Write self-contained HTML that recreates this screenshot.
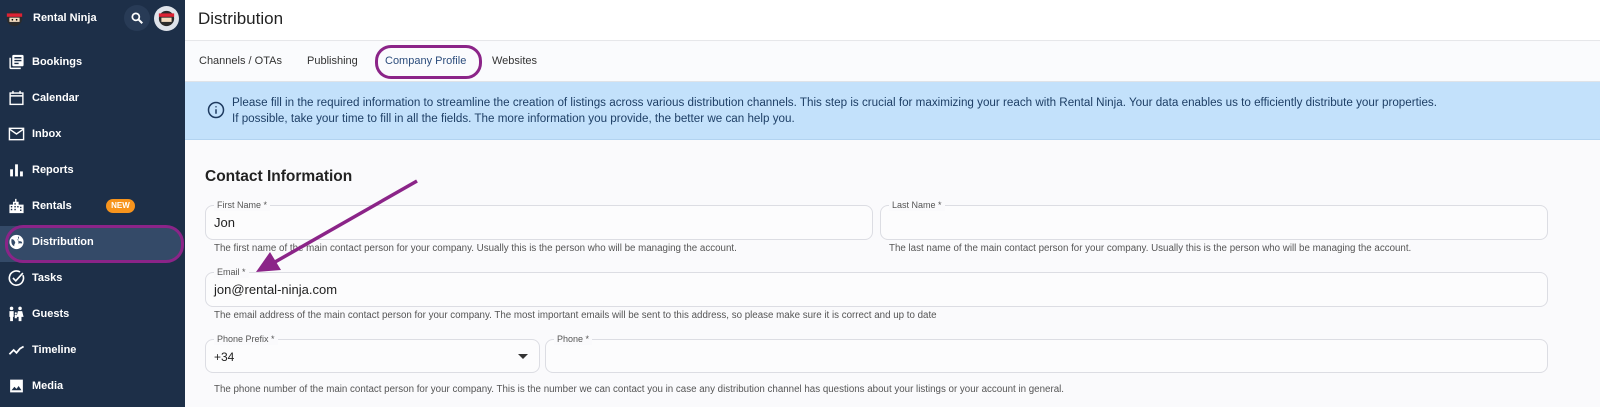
<!DOCTYPE html>
<html><head><meta charset="utf-8"><style>
*{margin:0;padding:0;box-sizing:border-box}
body{width:1600px;height:407px;overflow:hidden;font-family:"Liberation Sans",sans-serif;background:#fafafc;position:relative}
.a{position:absolute}
#sb{left:0;top:0;width:185px;height:407px;background:#1d2f48}
.nav{position:absolute;left:32px;color:#fff;font-size:11px;font-weight:bold;transform:translateY(-50%)}
.ic{position:absolute;left:8px;width:17px;height:17px;transform:translateY(-50%)}
.lab{position:absolute;font-size:9px;color:#555;background:#fafafc;padding:0 3px;left:8px;top:-6px;line-height:11px}
.fld{position:absolute;border:1px solid #dcdde3;border-radius:8px;background:#fcfcfd}
.val{position:absolute;left:8px;top:9px;font-size:13px;color:#222}
.help{position:absolute;font-size:9.75px;color:#555}
.tab{position:absolute;top:55px;font-size:11px;color:#333}
</style></head><body>
<div id="sb" class="a">
  <svg class="a" style="left:6px;top:10px" width="17" height="17" viewBox="0 0 20 20"><circle cx="10" cy="10" r="9" fill="#2b2b2b"/><rect x="1" y="4" width="18" height="4" fill="#d23"/><rect x="4" y="9" width="12" height="5" fill="#f4dcc0"/><circle cx="7.5" cy="11.5" r="1" fill="#000"/><circle cx="12.5" cy="11.5" r="1" fill="#000"/></svg>
  <div class="a" style="left:33px;top:12px;color:#fff;font-size:11px;font-weight:bold">Rental Ninja</div>
  <div class="a" style="left:124px;top:5px;width:26px;height:26px;border-radius:50%;background:#283b56"></div>
  <svg class="a" style="left:130px;top:11px" width="14" height="14" viewBox="0 0 24 24"><circle cx="10" cy="10" r="6" stroke="#fff" stroke-width="3" fill="none"/><path d="M14.5 14.5L21 21" stroke="#fff" stroke-width="3.5"/></svg>
  <div class="a" style="left:154px;top:6px;width:25px;height:25px;border-radius:50%;background:#dfe3ea"></div>
  <svg class="a" style="left:158px;top:10px" width="17" height="17" viewBox="0 0 20 20"><circle cx="10" cy="10" r="9" fill="#2b2b2b"/><rect x="1" y="4" width="18" height="4" fill="#d23"/><rect x="4" y="9" width="12" height="5" fill="#f4dcc0"/></svg>

  <div class="a" style="left:0;top:226px;width:182px;height:36px;background:#344a68;border-radius:0 14px 14px 0"></div>
  <div class="a" style="left:5px;top:225px;width:179px;height:38px;border:3px solid #8b2488;border-radius:18px"></div>

  <svg class="ic" style="top:62px" viewBox="0 0 24 24" fill="#fff"><path d="M4 6H2v14a2 2 0 002 2h14v-2H4V6zm16-4H8a2 2 0 00-2 2v12a2 2 0 002 2h12a2 2 0 002-2V4a2 2 0 00-2-2zm-1 9H9V9h10v2zm-4 4H9v-2h6v2zm4-8H9V5h10v2z"/></svg>
  <div class="nav" style="top:62px">Bookings</div>
  <svg class="ic" style="top:98px" viewBox="0 0 24 24" fill="none" stroke="#fff" stroke-width="2"><rect x="3" y="5" width="18" height="16"/><path d="M3 9h18M7 2v4M17 2v4"/></svg>
  <div class="nav" style="top:98px">Calendar</div>
  <svg class="ic" style="top:134px" viewBox="0 0 24 24" fill="none" stroke="#fff" stroke-width="2"><rect x="2" y="4" width="20" height="16"/><path d="M2 5l10 7 10-7"/></svg>
  <div class="nav" style="top:134px">Inbox</div>
  <svg class="ic" style="top:170px" viewBox="0 0 24 24" fill="#fff"><rect x="3" y="11" width="4" height="10"/><rect x="10" y="4" width="4" height="17"/><rect x="17" y="14" width="4" height="7"/></svg>
  <div class="nav" style="top:170px">Reports</div>
  <svg class="ic" style="top:206px" viewBox="0 0 24 24" fill="#fff"><path d="M2 22V10h5V6h3V2h2v4h3v4h7v12H2z"/><g fill="#1d2f48"><rect x="4" y="12" width="2" height="2"/><rect x="4" y="16" width="2" height="2"/><rect x="9" y="8" width="2" height="2"/><rect x="9" y="12" width="2" height="2"/><rect x="13" y="12" width="2" height="2"/><rect x="17" y="13" width="2" height="2"/><rect x="17" y="17" width="2" height="2"/><rect x="9" y="16" width="2" height="2"/></g></svg>
  <div class="nav" style="top:206px">Rentals</div>
  <div class="a" style="left:106px;top:199px;width:29px;height:14px;border-radius:7px;background:#f7941d;color:#fff;font-size:8px;font-weight:bold;text-align:center;line-height:14px">NEW</div>
  <svg class="ic" style="top:242px" viewBox="0 0 24 24"><circle cx="12" cy="12" r="10" fill="#fff"/><path d="M5 8c3 0 4 2 5 4s-2 3-1 6c-3-1-5-4-4-10zM14 4c2 1 2 3 0 4s1 3 3 3 3 1 3 3c-3 0-4-1-5 1" fill="#344a68"/></svg>
  <div class="nav" style="top:242px">Distribution</div>
  <svg class="ic" style="top:278px" viewBox="0 0 24 24" fill="none" stroke="#fff" stroke-width="2.3"><path d="M21 8a10 10 0 11-4-4.5"/><path d="M7 12l4 4 10-11"/></svg>
  <div class="nav" style="top:278px">Tasks</div>
  <svg class="ic" style="top:314px" viewBox="0 0 24 24" fill="#fff"><circle cx="5" cy="4" r="2.5"/><circle cx="17" cy="4" r="2.5"/><path d="M2 8h6v8H7v6H3v-6H2zM14 8h6l2 8h-3v6h-4v-6h-3z"/><circle cx="11" cy="11" r="1.5"/><path d="M9.5 13h3v5h-3z"/></svg>
  <div class="nav" style="top:314px">Guests</div>
  <svg class="ic" style="top:350px" viewBox="0 0 24 24" fill="none" stroke="#fff" stroke-width="2.5"><path d="M2 18l6-6 4 4 5-6 5 -3"/></svg>
  <div class="nav" style="top:350px">Timeline</div>
  <svg class="ic" style="top:386px" viewBox="0 0 24 24" fill="#fff"><path d="M3 3h18v18H3z"/><path d="M5 18l4-5 3 3 3-4 4 6z" fill="#1d2f48"/></svg>
  <div class="nav" style="top:386px">Media</div>
</div>

<div class="a" style="left:185px;top:0;width:1415px;height:41px;background:#fff;border-bottom:1px solid #e6e7ea"></div>
<div class="a" style="left:198px;top:9px;font-size:17px;color:#222">Distribution</div>
<div class="a" style="left:185px;top:42px;width:1415px;height:40px;background:#fafbfd;border-bottom:1px solid #dfe3e8"></div>
<div class="tab" style="left:199px">Channels / OTAs</div>
<div class="tab" style="left:307px">Publishing</div>
<div class="tab" style="left:385px;color:#2c4d7c">Company Profile</div>
<div class="tab" style="left:492px">Websites</div>
<div class="a" style="left:375px;top:45px;width:107px;height:34px;border:3px solid #8b2488;border-radius:16px"></div>

<div class="a" style="left:185px;top:82px;width:1415px;height:58px;background:#c3e1fb;border-bottom:1px solid #b2d3f0"></div>
<svg class="a" style="left:207px;top:101px" width="18" height="18" viewBox="0 0 24 24" fill="none" stroke="#1e3a5f" stroke-width="2"><circle cx="12" cy="12" r="10"/><path d="M12 11v6M12 7v1.5"/></svg>
<div class="a" style="left:232px;top:95px;font-size:11.65px;line-height:16px;color:#1e3f66;white-space:nowrap">Please fill in the required information to streamline the creation of listings across various distribution channels. This step is crucial for maximizing your reach with Rental Ninja. Your data enables us to efficiently distribute your properties.<br>If possible, take your time to fill in all the fields. The more information you provide, the better we can help you.</div>

<div class="a" style="left:205px;top:168px;font-size:15.5px;font-weight:bold;color:#222">Contact Information</div>

<div class="fld" style="left:205px;top:205px;width:668px;height:35px"><div class="lab">First Name *</div><div class="val">Jon</div></div>
<div class="help" style="left:214px;top:243px">The first name of the main contact person for your company. Usually this is the person who will be managing the account.</div>
<div class="fld" style="left:880px;top:205px;width:668px;height:35px"><div class="lab">Last Name *</div></div>
<div class="help" style="left:889px;top:243px">The last name of the main contact person for your company. Usually this is the person who will be managing the account.</div>

<div class="fld" style="left:205px;top:272px;width:1343px;height:35px"><div class="lab">Email *</div><div class="val">jon@rental-ninja.com</div></div>
<div class="help" style="left:214px;top:310px">The email address of the main contact person for your company. The most important emails will be sent to this address, so please make sure it is correct and up to date</div>

<div class="fld" style="left:205px;top:339px;width:335px;height:34px"><div class="lab">Phone Prefix *</div><div class="val" style="font-size:12px;top:10px">+34</div>
<div class="a" style="left:312px;top:14px;width:0;height:0;border-left:5px solid transparent;border-right:5px solid transparent;border-top:5px solid #333"></div></div>
<div class="fld" style="left:545px;top:339px;width:1003px;height:34px"><div class="lab">Phone *</div></div>
<div class="help" style="left:214px;top:384px">The phone number of the main contact person for your company. This is the number we can contact you in case any distribution channel has questions about your listings or your account in general.</div>

<svg class="a" style="left:0;top:0" width="1600" height="407"><line x1="417" y1="181" x2="275" y2="262" stroke="#8b2488" stroke-width="3.5"/><path d="M256 272L270 252L281 270Z" fill="#8b2488"/></svg>
</body></html>
